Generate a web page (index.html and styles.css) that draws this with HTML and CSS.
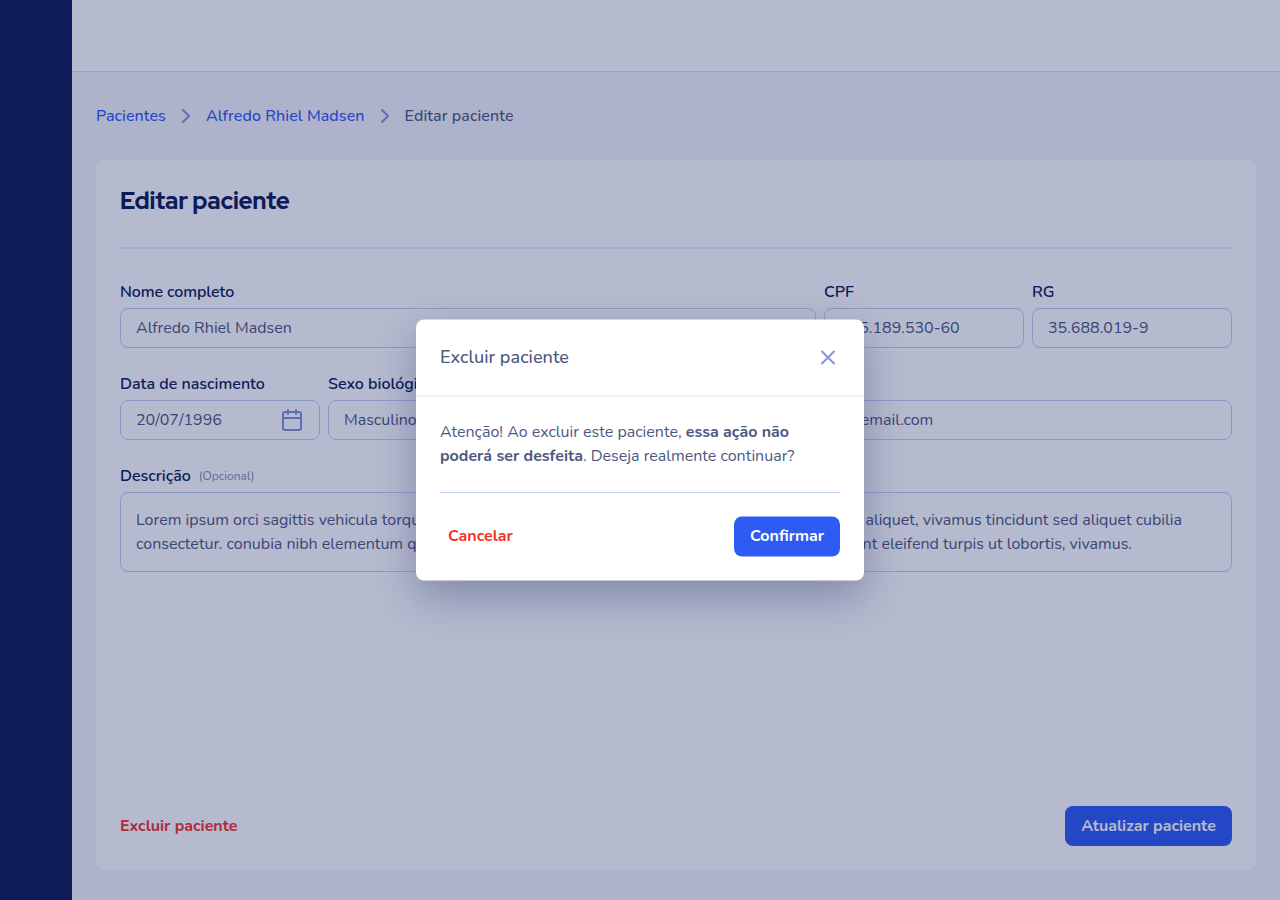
FILE: index.html
```html
<!DOCTYPE html>
<html lang="pt-BR">
<head>
<meta charset="utf-8">
<title>Editar paciente</title>
<link rel="stylesheet" href="styles.css">
</head>
<body>
<div class="app">
  <aside class="sidebar"></aside>
  <div class="content">
    <header class="topbar"></header>
    <main class="main">
      <nav class="breadcrumb">
        <a class="crumb">Pacientes</a>
        <svg class="icon" viewBox="0 0 24 24"><path d="M9 18l6-6-6-6"/></svg>
        <a class="crumb">Alfredo Rhiel Madsen</a>
        <svg class="icon" viewBox="0 0 24 24"><path d="M9 18l6-6-6-6"/></svg>
        <span class="crumb current">Editar paciente</span>
      </nav>
      <section class="card">
        <h1 class="title">Editar paciente</h1>
        <form class="form">
          <div class="row row-identity">
            <div class="field"><label class="label label-name">Nome completo</label><div class="input">Alfredo Rhiel Madsen</div></div>
            <div class="field"><label class="label">CPF</label><div class="input">425.189.530-60</div></div>
            <div class="field"><label class="label">RG</label><div class="input">35.688.019-9</div></div>
          </div>
          <div class="row row-contact">
            <div class="field"><label class="label">Data de nascimento</label><div class="input date">20/07/1996
              <svg class="icon" viewBox="0 0 24 24"><rect x="3" y="4" width="18" height="18" rx="2"/><path d="M16 2v4M8 2v4M3 10h18"/></svg></div></div>
            <div class="field"><label class="label">Sexo biológico</label><div class="input">Masculino</div></div>
            <div class="field"><label class="label">Telefone</label><div class="input"></div></div>
            <div class="field"><label class="label">E-mail</label><div class="input">alfredo.rhiel@email.com</div></div>
          </div>
          <div class="field">
            <label class="label">Descrição <small class="optional">(Opcional)</small></label>
            <div class="textarea">
              <p class="line line-first"><span>Lorem ipsum orci sagittis vehicula torquent</span><span>aliquet, vivamus tincidunt sed aliquet cubilia</span></p>
              <p class="line line-second"><span>consectetur. conubia nibh elementum quam</span><span>tincidunt eleifend turpis ut lobortis, vivamus.</span></p>
            </div>
          </div>
        </form>
        <footer class="actions">
          <button class="link-danger">Excluir paciente</button>
          <button class="button update">Atualizar paciente</button>
        </footer>
      </section>
    </main>
  </div>
</div>
<div class="overlay">
  <div class="modal" role="dialog">
    <header class="modal-header">
      <h2 class="modal-title">Excluir paciente</h2>
      <svg class="icon" viewBox="0 0 24 24"><path d="M18 6L6 18M6 6l12 12"/></svg>
    </header>
    <div class="modal-body">
      <p class="message">Atenção! Ao excluir este paciente, <strong>essa ação não<br>poderá ser desfeita</strong>. Deseja realmente continuar?</p>
      <div class="divider"></div>
      <div class="modal-actions">
        <button class="link-danger cancel">Cancelar</button>
        <button class="button confirm">Confirmar</button>
      </div>
    </div>
  </div>
</div>
</body>
</html>
```
FILE: styles.css
```css
* { box-sizing: border-box; }
body, h1, h2, p { margin: 0; }
body {
  font-family: Nunito, Lato, "Open Sans", sans-serif;
  font-size: 16px;
  line-height: 24px;
  color: #4d587f;
  overflow: hidden;
  white-space: nowrap;
  -webkit-font-smoothing: antialiased;
}
button { font: inherit; border: 0; background: none; padding: 0; }
.app { display: flex; height: 900px; }
.sidebar { width: 72px; background: #0d1d58; }
.content { flex: 1; display: flex; flex-direction: column; background: #f4f5fb; }
.topbar { height: 72px; background: #fff; border-bottom: 1px solid #dae0f0; }
.main { flex: 1; display: flex; flex-direction: column; padding: 32px 24px 30px; }
.breadcrumb { display: flex; align-items: center; gap: 8px; height: 24px; margin-bottom: 32px; }
.crumb { font-weight: 500; color: #2e5bf2; letter-spacing: .08px; }
.current { color: #4d587f; }
.icon {
  width: 24px; height: 24px; flex: none;
  fill: none; stroke: #8093dc; stroke-width: 2; stroke-linejoin: round; stroke-linecap: round;
}
.card {
  flex: 1; display: flex; flex-direction: column;
  padding: 24px; background: #fff; border-radius: 8px;
}
.title {
  height: 65px; padding-top: 1px; border-bottom: 2px solid #e4e8fa;
  font: 800 24px/32px "Red Hat Display", Inter, sans-serif;
  letter-spacing: -.25px; color: #0c1c58;
}
.form { display: flex; flex-direction: column; gap: 24px; padding-top: 31px; }
.row { display: grid; gap: 8px; }
.row-identity { grid-template-columns: 1fr 200px 200px; }
.row-contact { grid-template-columns: 200px 200px 200px 1fr; }
.field { display: flex; flex-direction: column; gap: 4px; min-width: 0; }
.label { display: flex; gap: 8px; height: 24px; font-weight: 600; color: #0c1c58; }
.label-name { letter-spacing: -.1px; }
.optional { font-size: 12px; font-weight: 400; color: #8290b2; }
.input, .textarea { border: 1px solid #c3cff4; border-radius: 8px; padding: 0 15px; }
.input { height: 40px; line-height: 38px; }
.date { display: flex; align-items: center; justify-content: space-between; }
.textarea { height: 80px; padding-top: 15px; }
.line { display: flex; justify-content: space-between; }
.line-first { width: 1046px; }
.line-second { width: 996px; }
.actions { display: flex; justify-content: space-between; align-items: center; margin-top: auto; }
.link-danger { color: #f5311f; font-weight: 700; }
.button { height: 40px; border-radius: 8px; background: #2e5bf2; color: #fff; font-weight: 700; text-align: center; }
.update { width: 167px; }
.overlay { position: absolute; inset: 0; background: rgba(12, 28, 92, .3); }
.modal {
  width: 448px; height: 261px;
  position: absolute; top: 50%; left: 50%; transform: translate(-50%, -50%);
  background: #fff; border-radius: 8px;
  box-shadow: 0 16px 40px rgba(12, 28, 92, .3);
}
.modal-header {
  display: flex; align-items: center; justify-content: space-between;
  height: 77px; padding: 0 24px; border-bottom: 1px solid #dbe1f8;
}
.modal-title { font-size: 18px; font-weight: 500; letter-spacing: .06px; padding-bottom: 2px; }
.modal-body { padding: 23px 24px 24px; }
.divider { height: 1px; margin: 25px 0 23px; background: #c3cff4; transform: translateY(-.5px); }
.modal-actions { display: flex; justify-content: space-between; align-items: center; }
.cancel, .confirm { padding-bottom: 2px; }
.cancel { margin-left: 8px; }
.confirm { width: 106px; }
```
